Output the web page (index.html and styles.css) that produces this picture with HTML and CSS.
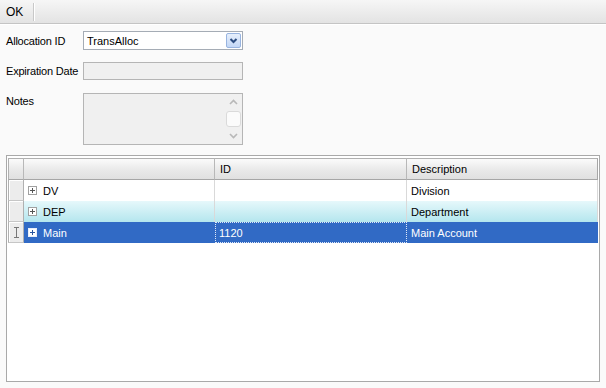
FILE: index.html
```html
<!DOCTYPE html>
<html lang="en">
<head>
    <meta charset="UTF-8">
    <title>Allocation</title>
    <link rel="stylesheet" href="styles.css">
</head>
<body>

    <div class="toolbar">
        <span class="tool-btn">OK</span>
        <span class="tool-sep"></span>
    </div>

    <div class="form">
        <div class="field">
            <label class="field-label">Allocation ID</label>
            <div class="combo">
                <span class="combo-text">TransAlloc</span>
                <span class="combo-btn">
                    <svg width="15" height="15" viewBox="0 0 15 15">
                        <path d="M4.5 6 L7.5 9 L10.5 6" fill="none" stroke="#2b4c80" stroke-width="2"/>
                    </svg>
                </span>
            </div>
        </div>

        <div class="field">
            <label class="field-label">Expiration Date</label>
            <div class="textbox"></div>
        </div>

        <div class="field field-top">
            <label class="field-label">Notes</label>
            <div class="textbox notes">
                <div class="scrollbar">
                    <span class="scroll-arrow">
                        <svg width="15" height="15" viewBox="0 0 15 15">
                            <path d="M4 9 L7.5 5.5 L11 9" fill="none" stroke="#b8b8b8" stroke-width="1.6"/>
                        </svg>
                    </span>
                    <span class="scroll-thumb"></span>
                    <span class="scroll-arrow">
                        <svg width="15" height="15" viewBox="0 0 15 15">
                            <path d="M4 6 L7.5 9.5 L11 6" fill="none" stroke="#b8b8b8" stroke-width="1.6"/>
                        </svg>
                    </span>
                </div>
            </div>
        </div>
    </div>

    <div class="grid">
        <div class="grid-table">
            <div class="hd hd-ind"></div>
            <div class="hd"></div>
            <div class="hd">ID</div>
            <div class="hd hd-last">Description</div>

            <div class="ind"></div>
            <div class="cell"><span class="expander"></span>DV</div>
            <div class="cell"></div>
            <div class="cell">Division</div>

            <div class="ind ind-alt"></div>
            <div class="cell alt"><span class="expander"></span>DEP</div>
            <div class="cell alt"></div>
            <div class="cell alt">Department</div>

            <div class="ind ind-edit">
                <svg width="7" height="11" viewBox="0 0 7 11">
                    <path d="M1 0.5 H6 M1 10.5 H6 M3.5 0.5 V10.5" fill="none" stroke="#777" stroke-width="1"/>
                </svg>
            </div>
            <div class="cell sel"><span class="expander expander-sel"></span>Main</div>
            <div class="cell sel focus">1120</div>
            <div class="cell sel">Main Account</div>
        </div>
    </div>

</body>
</html>
```

FILE: styles.css
```css
/* --- Base --- */
:root {
    --bg: #fafafa;
    --border: #a9a9a9;
    --grid-line: #d9d9d9;
    --select: #316ac5;
}

body, html {
    margin: 0;
    padding: 0;
    height: 100%;
    background: var(--bg);
    font-family: "Liberation Sans", Arial, sans-serif;
    font-size: 11px;
    color: #000;
    overflow: hidden;
}

/* --- Toolbar --- */
.toolbar {
    display: flex;
    align-items: center;
    height: 23px;
    padding-left: 6px;
    background: linear-gradient(#f6f6f6, #e3e3e3);
    border-bottom: 1px solid #c4c4c4;
    box-shadow: 0 1px 0 #ffffff;
}

.tool-btn {
    font-size: 12px;
    padding-right: 10px;
}

.tool-sep {
    width: 1px;
    height: 18px;
    background: #c8c8c8;
    border-right: 1px solid #fff;
}

/* --- Form fields --- */
.form {
    display: flex;
    flex-direction: column;
    gap: 12px;
    padding: 7px 6px 0 6px;
}

.field {
    display: flex;
    align-items: center;
}

.field-top {
    align-items: flex-start;
    margin-top: 1px;
}

.field-top .field-label {
    padding-top: 2px;
}

.field-label {
    width: 77px;
    flex-shrink: 0;
    letter-spacing: -0.2px;
}

.combo {
    display: flex;
    align-items: center;
    justify-content: space-between;
    box-sizing: border-box;
    width: 160px;
    height: 19px;
    padding: 0 1px 0 3px;
    background: #fff;
    border: 1px solid #a5acb5;
}

.combo-btn {
    display: flex;
    box-sizing: border-box;
    width: 15px;
    height: 15px;
    border: 1px solid #98b4e0;
    border-radius: 2px;
    background: linear-gradient(#e6effc, #c3d7f6);
}

.combo-btn svg {
    margin: -1px;
}

.textbox {
    box-sizing: border-box;
    width: 160px;
    height: 18px;
    background: #f0f0f0;
    border: 1px solid #b5b5b5;
}

.notes {
    display: flex;
    justify-content: flex-end;
    height: 52px;
    padding: 1px;
}

.scrollbar {
    display: flex;
    flex-direction: column;
    width: 15px;
}

.scroll-arrow {
    display: flex;
    height: 15px;
}

.scroll-thumb {
    flex: 1;
    margin: 1px 0;
    background: #fbfbfb;
    border: 1px solid #dadada;
    border-radius: 3px;
}

/* --- Grid --- */
.grid {
    box-sizing: border-box;
    height: 227px;
    margin: 10px 6px 0 6px;
    padding: 2px 1px 0 1px;
    background: #fff;
    border: 1px solid var(--border);
}

.grid-table {
    display: grid;
    grid-template-columns: 16px 191px 192px 1fr;
    grid-template-rows: 22px repeat(3, 21px);
}

.hd {
    display: flex;
    align-items: center;
    padding-left: 5px;
    background: linear-gradient(#fbfbfb, #e9e9e9 55%, #e0e0e0);
    border-top: 1px solid #b0b0b0;
    border-right: 1px solid #b8b8b8;
    border-bottom: 1px solid #a6a6a6;
}

.hd-ind {
    padding: 0;
    border-left: 1px solid #b0b0b0;
}

.hd-last {
    border-right: 1px solid #a6a6a6;
}

.ind {
    display: flex;
    align-items: center;
    justify-content: center;
    background: #ececec;
    border-left: 1px solid #b0b0b0;
    border-right: 1px solid #b0b0b0;
    border-bottom: 1px solid #c6c6c6;
    box-shadow: inset 1px 1px 0 #fff;
}

.cell {
    display: flex;
    align-items: center;
    padding-left: 4px;
    border-right: 1px solid var(--grid-line);
    white-space: nowrap;
}

.alt {
    background: linear-gradient(#e6f8fb, #b4e6ee);
}

.sel {
    background: var(--select);
    color: #fff;
    border-right-color: var(--select);
}

.focus {
    outline: 1px dotted #dfe8f7;
    outline-offset: -1px;
}

.expander {
    position: relative;
    box-sizing: border-box;
    width: 9px;
    height: 9px;
    margin: 0 6px 0 0;
    background: #fff;
    border: 1px solid #a0a0a0;
}

/* plus sign of the tree expander */
.expander::before,
.expander::after {
    content: "";
    position: absolute;
    background: #555;
}

.expander::before {
    left: 1px;
    top: 3px;
    width: 5px;
    height: 1px;
}

.expander::after {
    left: 3px;
    top: 1px;
    width: 1px;
    height: 5px;
}

.expander-sel {
    border-color: #e8eefa;
}

.expander-sel::before,
.expander-sel::after {
    background: #2a56a0;
}
```
